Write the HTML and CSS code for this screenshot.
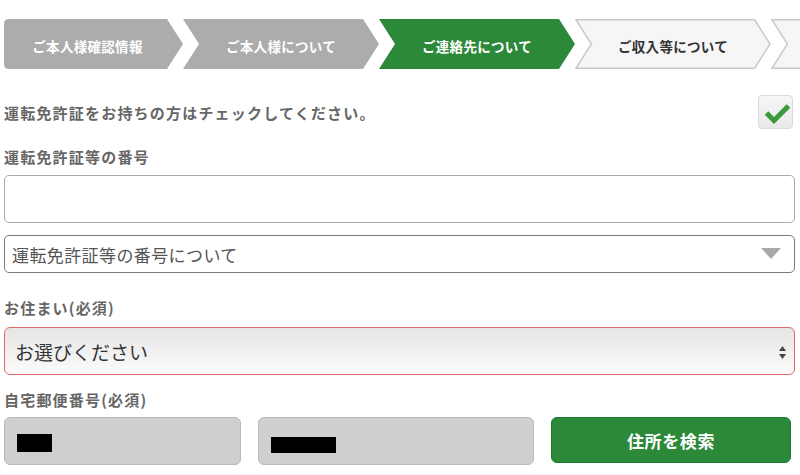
FILE: index.html
```html
<!DOCTYPE html>
<html lang="ja">
<head>
<meta charset="utf-8">
<title>ご連絡先について</title>
<link rel="stylesheet" href="styles.css">
</head>
<body>
<div class="page">
  <nav class="steps">
    <div class="step step-first step-done">
      <svg class="step-shape" viewBox="0 0 179 50" width="179" height="50"><path d="M5,0 H163 L179,25 L163,50 H5 Q0,50 0,45 V5 Q0,0 5,0 Z"/></svg>
      <span class="step-label">ご本人様確認情報</span>
    </div>
    <div class="step step-done">
      <svg class="step-shape" viewBox="0 0 196 50" width="196" height="50"><polygon points="0,0 180,0 196,25 180,50 0,50 16,25"/></svg>
      <span class="step-label">ご本人様について</span>
    </div>
    <div class="step step-current">
      <svg class="step-shape" viewBox="0 0 196 50" width="196" height="50"><polygon points="0,0 180,0 196,25 180,50 0,50 16,25"/></svg>
      <span class="step-label">ご連絡先について</span>
    </div>
    <div class="step step-next">
      <svg class="step-shape" viewBox="0 0 196 50" width="196" height="50"><polygon points="1,0.75 179.6,0.75 195,25 179.6,49.25 1,49.25 16.4,25"/></svg>
      <span class="step-label">ご収入等について</span>
    </div>
    <div class="step step-next">
      <svg class="step-shape" viewBox="0 0 196 50" width="196" height="50"><polygon points="1,0.75 179.6,0.75 195,25 179.6,49.25 1,49.25 16.4,25"/></svg>
    </div>
  </nav>

  <div class="check-row">
    <span class="label">運転免許証をお持ちの方はチェックしてください。</span>
    <span class="checkbox">
      <svg width="35" height="34" viewBox="0 0 35 34"><polyline points="8.5,18 16,25.5 30.5,11" fill="none" stroke="#3a9a3a" stroke-width="5"/></svg>
    </span>
  </div>

  <div class="label label-license">運転免許証等の番号</div>
  <div class="text-input"></div>

  <div class="select-plain">
    <span>運転免許証等の番号について</span>
    <svg class="tri" width="20" height="11" viewBox="0 0 20 11"><polygon points="0,0 20,0 10,11" fill="#a9a9a9"/></svg>
  </div>

  <div class="label label-home">お住まい(必須)</div>
  <div class="select-error">
    <span>お選びください</span>
    <svg class="updown" width="7" height="13" viewBox="0 0 7 13"><polygon points="3.5,0 7,5 0,5" fill="#444"/><polygon points="0,8 7,8 3.5,13" fill="#444"/></svg>
  </div>

  <div class="label label-zip">自宅郵便番号(必須)</div>
  <div class="zip-row">
    <div class="zip-input zip-a"><span class="redact redact-a"></span></div>
    <div class="zip-input zip-b"><span class="redact redact-b"></span></div>
    <div class="search-btn">住所を検索</div>
  </div>
</div>
</body>
</html>
```

FILE: styles.css
```css
* { box-sizing: border-box; }
html, body {
  margin: 0;
  padding: 0;
  background: #fff;
  overflow: hidden;
}
body {
  font-family: "Noto Sans CJK JP", "Noto Sans", sans-serif;
  width: 800px;
  height: 475px;
}
.page {
  padding: 19px 5px 0 4px;
}

/* steps */
.steps {
  display: flex;
  overflow: hidden;
  height: 50px;
  width: 796px;
}
.step {
  display: grid;
  flex: 0 0 196px;
  height: 50px;
}
.step-first { flex-basis: 179px; }
.step > * { grid-area: 1 / 1; }
.step-shape { display: block; }
.step-label {
  display: flex;
  align-items: center;
  justify-content: center;
  padding: 3px 16px 0 16px;
  font-size: 13.5px;
  font-weight: bold;
  letter-spacing: 0.3px;
  color: #fff;
  white-space: nowrap;
}
.step-first .step-label { padding-left: 4px; }
.step-done .step-shape { fill: #acacac; }
.step-current .step-shape { fill: #2c893a; }
.step-next .step-shape { fill: #f6f6f6; stroke: #c9c9c9; stroke-width: 1.5; }
.step-next .step-label { color: #333; }

/* labels */
.label {
  font-size: 15px;
  line-height: 20px;
  font-weight: bold;
  color: #666;
  letter-spacing: 1.2px;
  white-space: nowrap;
}
.check-row {
  margin-top: 26px;
  height: 34px;
  display: flex;
  align-items: center;
  justify-content: space-between;
  padding-right: 2px;
}
.check-row .label { margin-top: 2px; }
.checkbox {
  width: 35px;
  height: 34px;
  border: 1px solid #dadada;
  border-radius: 4px;
  background: linear-gradient(#f6f6f6, #e9e9e9);
  display: block;
  overflow: hidden;
}
.checkbox svg { display: block; margin: -1px 0 0 -1px; }

.label-license { margin-top: 18px; }
.text-input {
  margin-top: 8px;
  height: 48px;
  border: 1px solid #a9a9a9;
  border-radius: 5px;
  background: #fff;
}
.select-plain {
  margin-top: 12px;
  height: 38px;
  border: 1px solid #7a7a7a;
  border-radius: 5px;
  display: flex;
  align-items: center;
  justify-content: space-between;
  padding: 0 13px 0 7px;
  font-size: 17px;
  color: #555;
  letter-spacing: 0.4px;
}
.select-plain .tri { margin-top: -2px; }

.label-home { margin-top: 25px; }
.select-error {
  margin-top: 9px;
  height: 48px;
  border: 1px solid #e06a6a;
  border-radius: 6px;
  background: linear-gradient(#e5e5e5, #fbfbfb);
  display: flex;
  align-items: center;
  justify-content: space-between;
  padding: 0 8px 0 10px;
  font-size: 19px;
  color: #333;
}
.select-error .updown { margin-top: 2px; }

.label-zip { margin-top: 15px; }
.zip-row {
  margin-top: 7px;
  display: grid;
  grid-template-columns: 237px 276px 240px;
  column-gap: 17px;
  align-items: start;
}
.zip-input {
  height: 48px;
  background: #cfcfcf;
  border: 1px solid #b9b9b9;
  border-radius: 6px;
}
.redact {
  display: block;
  background: #000;
}
.redact-a { width: 35px; height: 18px; margin: 16px 0 0 12px; }
.redact-b { width: 65px; height: 16px; margin: 19px 0 0 12px; }
.search-btn {
  height: 46px;
  background: #2c893a;
  border: 1px solid #1f7a2d;
  border-radius: 6px;
  color: #fff;
  font-weight: bold;
  font-size: 17px;
  letter-spacing: 0.6px;
  display: flex;
  align-items: center;
  justify-content: center;
}
```
